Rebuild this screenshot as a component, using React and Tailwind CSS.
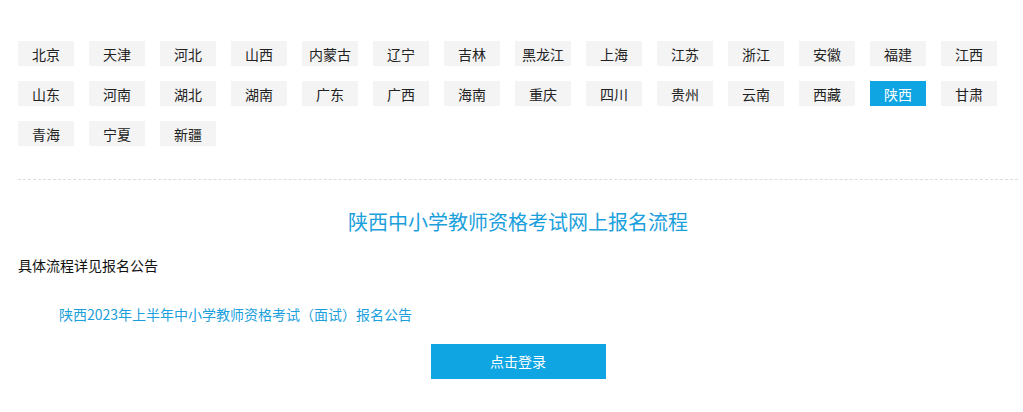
const provinces = [
  '北京', '天津', '河北', '山西', '内蒙古', '辽宁', '吉林', '黑龙江', '上海', '江苏', '浙江', '安徽', '福建', '江西',
  '山东', '河南', '湖北', '湖南', '广东', '广西', '海南', '重庆', '四川', '贵州', '云南', '西藏', '陕西', '甘肃',
  '青海', '宁夏', '新疆',
];

export default function App() {
  const active = '陕西';
  return (
    <div className="min-h-screen bg-white text-[14px] text-[#222] font-['Noto_Sans_CJK_SC','Noto_Sans',sans-serif]">
      <div className="w-[1000px] ml-[18px] pt-[41px]">
        {/* province tabs */}
        <div className="flex flex-wrap gap-[15px]">
          {provinces.map((p) => (
            <button
              key={p}
              className={`w-[56px] h-[25px] flex items-center justify-center text-[14px] leading-none ${
                p === active ? 'bg-[#0ea5e2] text-white' : 'bg-[#f4f4f4] text-[#222]'
              }`}
            >
              {p}
            </button>
          ))}
        </div>

        <div className="mt-[33px] border-t border-dashed border-[#dcdcdc]" />

        {/* content */}
        <h2 className="mt-[27px] text-center text-[20px] leading-[30px] text-[#1aa0dc]">
          陕西中小学教师资格考试网上报名流程
        </h2>
        <p className="mt-[18px] leading-[20px] font-normal text-[#111]">具体流程详见报名公告</p>
        <a href="#" className="block mt-[29px] ml-[41px] leading-[20px] text-[#1aa0dc]">
          陕西2023年上半年中小学教师资格考试（面试）报名公告
        </a>
        <div className="mt-[20px] flex justify-center">
          <button className="w-[175px] h-[35px] bg-[#0ea5e2] text-white text-[14px]">点击登录</button>
        </div>
      </div>
    </div>
  );
}
